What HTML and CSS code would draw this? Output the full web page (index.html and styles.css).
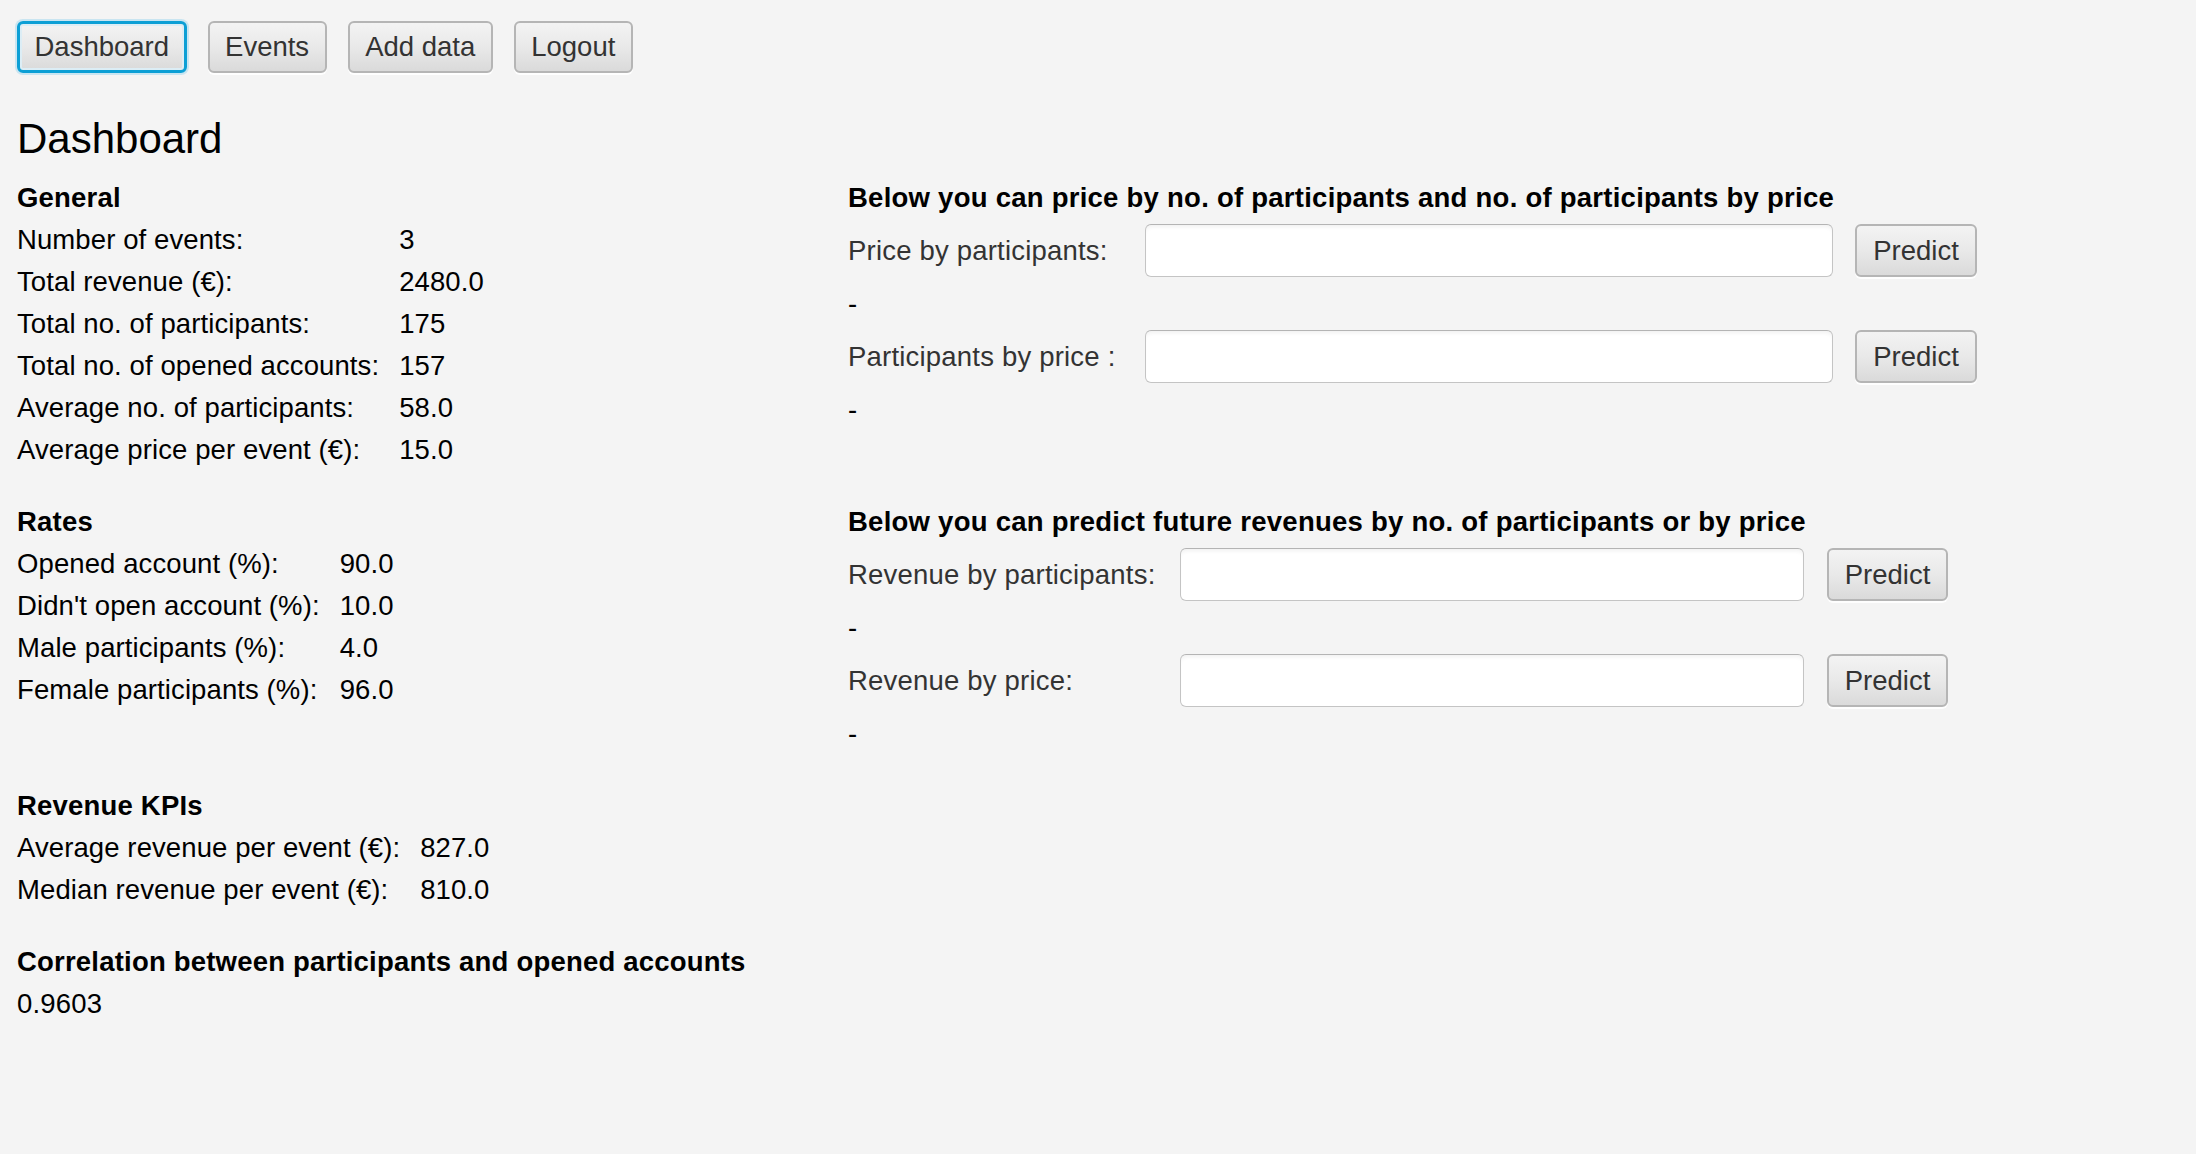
FILE: index.html
```html
<!DOCTYPE html>
<html lang="en">
<head>
<meta charset="utf-8">
<title>Dashboard</title>
<link rel="stylesheet" href="styles.css">
</head>
<body>
<div class="page">
  <nav class="nav">
    <button class="btn btn-focused">Dashboard</button>
    <button class="btn">Events</button>
    <button class="btn">Add data</button>
    <button class="btn">Logout</button>
  </nav>

  <h1 class="title">Dashboard</h1>

  <div class="content">
    <div class="left">
      <section class="stats">
        <h3 class="stats-head">General</h3>
        <div class="kv">
          <span>Number of events:</span><span>3</span>
          <span>Total revenue (€):</span><span>2480.0</span>
          <span>Total no. of participants:</span><span>175</span>
          <span>Total no. of opened accounts:</span><span>157</span>
          <span>Average no. of participants:</span><span>58.0</span>
          <span>Average price per event (€):</span><span>15.0</span>
        </div>
      </section>

      <section class="stats stats-rates">
        <h3 class="stats-head">Rates</h3>
        <div class="kv">
          <span>Opened account (%):</span><span>90.0</span>
          <span>Didn't open account (%):</span><span>10.0</span>
          <span>Male participants (%):</span><span>4.0</span>
          <span>Female participants (%):</span><span>96.0</span>
        </div>
      </section>

      <section class="stats stats-revenue">
        <h3 class="stats-head">Revenue KPIs</h3>
        <div class="kv">
          <span>Average revenue per event (€):</span><span>827.0</span>
          <span>Median revenue per event (€):</span><span>810.0</span>
        </div>
      </section>

      <section class="stats stats-corr">
        <h3 class="stats-head">Correlation between participants and opened accounts</h3>
        <div class="single">0.9603</div>
      </section>
    </div>

    <div class="right">
      <section class="predict predict-a">
        <h3 class="predict-head">Below you can price by no. of participants and no. of participants by price</h3>
        <div class="predict-row">
          <label class="predict-label">Price by participants:</label>
          <input class="field" type="text">
          <button class="btn">Predict</button>
        </div>
        <div class="result">-</div>
        <div class="predict-row">
          <label class="predict-label">Participants by price :</label>
          <input class="field" type="text">
          <button class="btn">Predict</button>
        </div>
        <div class="result">-</div>
      </section>

      <section class="predict predict-b">
        <h3 class="predict-head">Below you can predict future revenues by no. of participants or by price</h3>
        <div class="predict-row">
          <label class="predict-label">Revenue by participants:</label>
          <input class="field" type="text">
          <button class="btn">Predict</button>
        </div>
        <div class="result">-</div>
        <div class="predict-row">
          <label class="predict-label">Revenue by price:</label>
          <input class="field" type="text">
          <button class="btn">Predict</button>
        </div>
        <div class="result">-</div>
      </section>
    </div>
  </div>
</div>
</body>
</html>
```

FILE: styles.css
```css
* {
  box-sizing: border-box;
}

html, body {
  margin: 0;
  padding: 0;
  background: #f4f4f4;
}

body {
  font-family: "Liberation Sans", Arial, sans-serif;
  font-size: 27.5px;
  letter-spacing: 0.2px;
  color: #000;
  width: 2196px;
  height: 1154px;
  overflow: hidden;
}

.page {
  padding: 21px 17px 0 17px;
}

/* ---------- buttons ---------- */
.nav {
  display: flex;
  align-items: center;
  gap: 21px;
  height: 52px;
}

.btn {
  font-family: "Liberation Sans", Arial, sans-serif;
  font-size: 27.5px;
  letter-spacing: 0;
  color: #333;
  height: 52px;
  padding: 0 15.5px;
  border: 2px solid #b5b5b5;
  border-radius: 6px;
  background: linear-gradient(to bottom, #f3f3f3 0%, #e9e9e9 50%, #dadada 100%);
  box-shadow: 0 2px 0 0 rgba(255, 255, 255, 0.9);
  cursor: pointer;
  line-height: 1;
}

.btn-focused {
  border: 3px solid #0c9fd5;
  padding: 0 14.5px;
  box-shadow: 0 0 0 2px rgba(120, 200, 235, 0.35), inset 0 0 0 2px #dcedf5;
}

/* ---------- title ---------- */
.title {
  margin: 41px 0 0 0;
  font-size: 42px;
  font-weight: normal;
  letter-spacing: 0;
  line-height: 50px;
  height: 50px;
}

.content {
  margin-top: 7px;
  display: flex;
  align-items: flex-start;
}

/* ---------- left column ---------- */
.left {
  width: 831px;
  flex: none;
  padding-top: 6px;
}

.stats-head {
  margin: 0;
  font-size: 27.5px;
  font-weight: bold;
  line-height: 42px;
}

.kv {
  display: grid;
  grid-template-columns: max-content max-content;
  column-gap: 20px;
  line-height: 42px;
  letter-spacing: 0.1px;
}

.single {
  line-height: 42px;
}

.stats-rates {
  margin-top: 30px;
}

.stats-revenue {
  margin-top: 74px;
}

.stats-corr {
  margin-top: 30px;
}

/* ---------- right column ---------- */
.right {
  flex: 1;
}

.predict-b {
  margin-top: 59px;
}

.predict-head {
  margin: 0;
  font-size: 27.5px;
  font-weight: bold;
  letter-spacing: 0.25px;
  line-height: 53px;
  height: 53px;
}

.predict-row {
  display: grid;
  align-items: center;
  height: 53px;
}

.predict-a .predict-row {
  grid-template-columns: 297px 688px 144px;
}

.predict-b .predict-row {
  grid-template-columns: 332px 624px 144px;
}

.predict-row .btn {
  margin-left: 22px;
  padding: 0;
  height: 53px;
}

.predict-a .predict-row .btn {
  width: 122px;
}

.predict-b .predict-row .btn {
  width: 121px;
  margin-left: 23px;
}

.predict-label {
  color: #333;
  white-space: nowrap;
}

.field {
  height: 53px;
  width: 100%;
  border: 1.5px solid #c4c4c4;
  border-top-color: #b4b4b4;
  border-radius: 6px;
  background: #fff;
  box-shadow: inset 0 4px 4px -2px rgba(0, 0, 0, 0.06);
  font-family: "Liberation Sans", Arial, sans-serif;
  font-size: 27.5px;
  padding: 0 10px;
  outline: none;
}

.result {
  height: 53px;
  line-height: 53px;
}
```
